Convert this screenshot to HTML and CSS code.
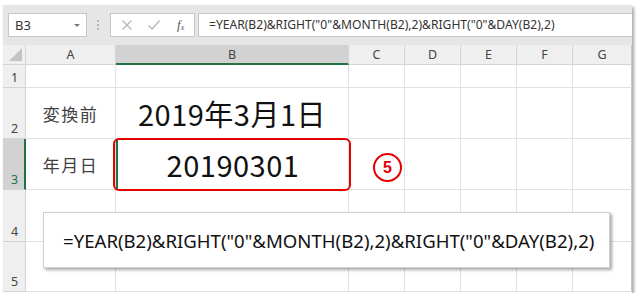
FILE: index.html
```html
<!DOCTYPE html>
<html>
<head>
  <meta charset="utf-8">
  <link rel="stylesheet" href="styles.css">
</head>
<body>
  <div class="window">
    <div class="toolbar">
      <div class="name-box">
        <span>B3</span>
        <span class="caret"></span>
      </div>
      <div class="grip"><i></i><i></i><i></i></div>
      <div class="buttons">
        <svg width="12" height="12" viewBox="0 0 12 12"><path d="M1.5 1.5 L10.5 10.5 M10.5 1.5 L1.5 10.5" stroke="#b4b4b4" stroke-width="1.2" fill="none"/></svg>
        <svg width="14" height="12" viewBox="0 0 14 12"><path d="M1.5 6.5 L5 10 L12.5 1.5" stroke="#b4b4b4" stroke-width="1.2" fill="none"/></svg>
        <span class="fx">f<sub>x</sub></span>
      </div>
      <div class="formula-input">=YEAR(B2)&amp;RIGHT("0"&amp;MONTH(B2),2)&amp;RIGHT("0"&amp;DAY(B2),2)</div>
    </div>

    <div class="sheet">
      <div class="head corner"><span class="tri"></span></div>
      <div class="head col">A</div>
      <div class="head col sel-col">B</div>
      <div class="head col">C</div>
      <div class="head col">D</div>
      <div class="head col">E</div>
      <div class="head col">F</div>
      <div class="head col last">G</div>

      <div class="head row">1</div>
      <div class="cell"></div><div class="cell"></div><div class="cell"></div><div class="cell"></div><div class="cell"></div><div class="cell"></div><div class="cell last"></div>

      <div class="head row">2</div>
      <div class="cell label">変換前</div>
      <div class="cell big">2019年3月1日</div>
      <div class="cell"></div><div class="cell"></div><div class="cell"></div><div class="cell"></div><div class="cell last"></div>

      <div class="head row sel-row">3</div>
      <div class="cell label">年月日</div>
      <div class="cell big active">20190301</div>
      <div class="cell"></div><div class="cell"></div><div class="cell"></div><div class="cell"></div><div class="cell last"></div>

      <div class="head row">4</div>
      <div class="cell"></div><div class="cell"></div><div class="cell"></div><div class="cell"></div><div class="cell"></div><div class="cell"></div><div class="cell last"></div>

      <div class="head row">5</div>
      <div class="cell"></div><div class="cell"></div><div class="cell"></div><div class="cell"></div><div class="cell"></div><div class="cell"></div><div class="cell last"></div>
    </div>

    <!-- annotations drawn over the sheet -->
    <div class="red-box"></div>
    <div class="step">5</div>
    <div class="callout">=YEAR(B2)&amp;RIGHT("0"&amp;MONTH(B2),2)&amp;RIGHT("0"&amp;DAY(B2),2)</div>
  </div>
</body>
</html>
```

FILE: styles.css
```css
body {
  margin: 0;
  background: #fff;
  font-family: "Noto Sans", "Noto Sans CJK JP", sans-serif;
}

.window {
  position: relative;
  margin: 5px 0 0 3px;
  width: 629px;
  height: 288px;
  background: #fff;
  box-shadow: 2px 2px 3px rgba(0, 0, 0, 0.35);
}

.toolbar {
  display: flex;
  align-items: center;
  height: 40px;
  background: #e6e6e6;
  padding-left: 5px;
  box-sizing: border-box;
}

.name-box {
  display: flex;
  align-items: center;
  justify-content: space-between;
  width: 79px;
  height: 24px;
  box-sizing: border-box;
  background: #fff;
  border: 1px solid #c6c6c6;
  padding: 0 6px;
  font-size: 13px;
  color: #333;
}

.caret {
  width: 0;
  height: 0;
  border-left: 3px solid transparent;
  border-right: 3px solid transparent;
  border-top: 3px solid #777;
}

.grip {
  display: flex;
  flex-direction: column;
  gap: 2px;
  margin: 0 11px 0 10px;
}

.grip i {
  display: block;
  width: 2px;
  height: 2px;
  background: #b8b8b8;
}

.buttons {
  display: flex;
  align-items: center;
  gap: 14px;
  width: 85px;
  height: 24px;
  box-sizing: border-box;
  background: #fff;
  border: 1px solid #c6c6c6;
  padding-left: 10px;
}

.fx {
  font-family: "Liberation Serif", serif;
  font-style: italic;
  font-size: 13px;
  color: #555;
  margin-left: 2px;
}

.fx sub {
  font-size: 8px;
  vertical-align: -1px;
}

.formula-input {
  flex: 1;
  height: 24px;
  line-height: 22px;
  margin-left: 3px;
  box-sizing: border-box;
  background: #fff;
  border: 1px solid #c6c6c6;
  border-right: none;
  padding-left: 10px;
  font-size: 12.1px;
  color: #333;
  white-space: nowrap;
}

.sheet {
  display: grid;
  grid-template-columns: 23px 90px 233px 56px 56px 56px 56px 59px;
  grid-template-rows: 20px 23px 51px 51px 52px 50px;
}

.head {
  background: #efefef;
  color: #444;
  font-size: 12.5px;
  box-sizing: border-box;
  border-right: 1px solid #d4d4d4;
  border-bottom: 1px solid #d4d4d4;
}

.col {
  display: flex;
  align-items: center;
  justify-content: center;
}

.col.last {
  border-right: 1px solid #c8c8c8;
}

.sel-col {
  background: #d2d2d2;
  border-bottom: 2px solid #217346;
}

.corner {
  position: relative;
}

.tri {
  position: absolute;
  right: 3px;
  bottom: 3px;
  width: 0;
  height: 0;
  border-left: 13px solid transparent;
  border-bottom: 13px solid #c4c4c4;
}

.row {
  display: flex;
  align-items: flex-end;
  padding: 0 0 1px 8px;
}

.sel-row {
  background: #d2d2d2;
  border-right: 2px solid #217346;
  color: #217346;
}

.cell {
  box-sizing: border-box;
  border-right: 1px solid #e1e1e1;
  border-bottom: 1px solid #e1e1e1;
}

.cell.last {
  border-right: 1px solid #c8c8c8;
}

.label {
  display: flex;
  align-items: center;
  justify-content: center;
  font-family: "Noto Sans CJK JP", sans-serif;
  font-size: 17px;
  letter-spacing: 1.5px;
  color: #404040;
  padding-top: 1px;
}

.big {
  display: flex;
  align-items: center;
  justify-content: center;
  font-family: "Noto Sans CJK JP", sans-serif;
  font-size: 29px;
  letter-spacing: 0.5px;
  color: #111;
}

.active {
  border-left: 2px solid #217346;
}

.red-box {
  position: absolute;
  left: 110px;
  top: 133px;
  width: 238px;
  height: 53px;
  box-sizing: border-box;
  border: 2px solid #e50000;
  border-radius: 6px;
}

.step {
  position: absolute;
  left: 370px;
  top: 148px;
  width: 29px;
  height: 29px;
  box-sizing: border-box;
  border: 2px solid #e50000;
  border-radius: 50%;
  display: flex;
  align-items: center;
  justify-content: center;
  font-family: "Liberation Sans", sans-serif;
  font-weight: bold;
  font-size: 16px;
  color: #e50000;
}

.callout {
  position: absolute;
  left: 40px;
  top: 207px;
  width: 567px;
  height: 56px;
  box-sizing: border-box;
  background: #fff;
  border: 1px solid #d0d0d0;
  box-shadow: 2px 2px 3px rgba(0, 0, 0, 0.35);
  display: flex;
  align-items: center;
  padding-left: 19px;
  font-size: 18.6px;
  color: #111;
  white-space: nowrap;
}
```
